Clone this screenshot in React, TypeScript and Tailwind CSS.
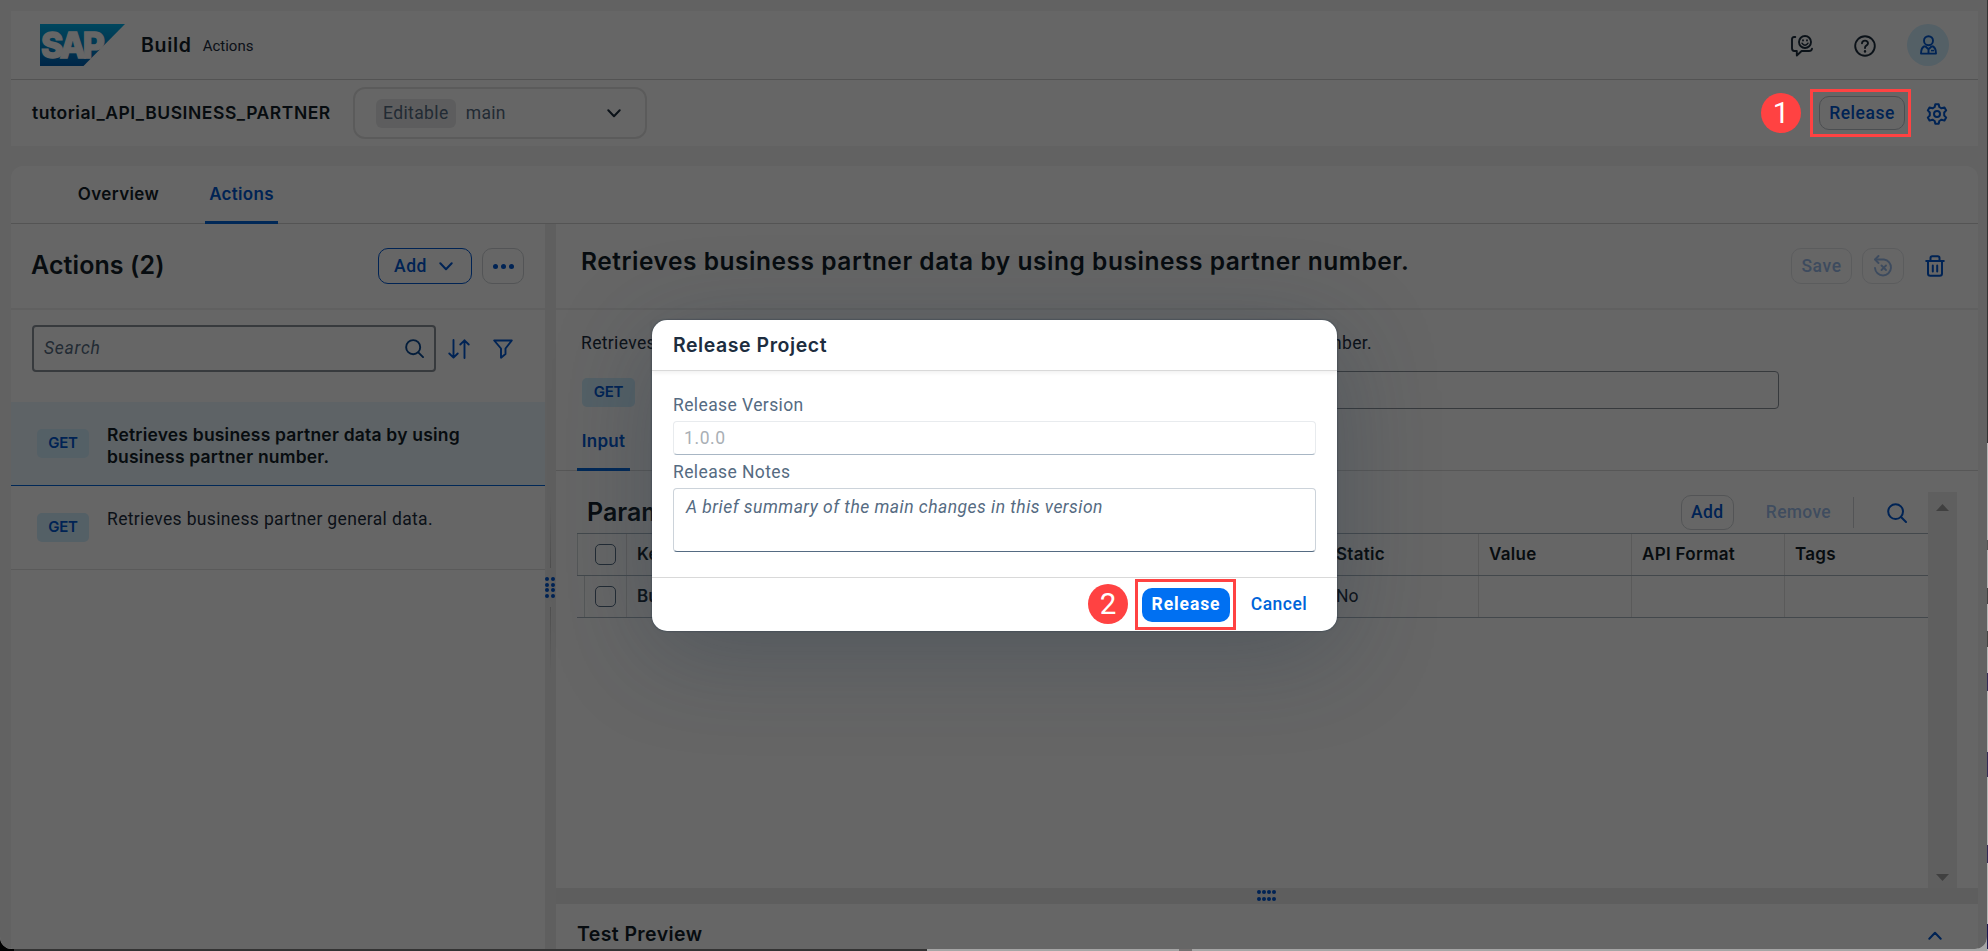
import type { ReactNode } from 'react';

const BOLD = "font-['Inter','Liberation_Sans',sans-serif] font-semibold";
const MEDIUM = "font-['Roboto','Liberation_Sans',sans-serif] font-medium";

function MethodTag({ className }: { className: string }) {
  return (
    <span className={`${BOLD} flex h-[29px] shrink-0 items-center justify-center rounded-[5px] bg-[#d1efff] pb-px text-[15px] tracking-[-0.2px] text-[#0057d2] ${className}`}>
      GET
    </span>
  );
}

function SearchIcon({ className }: { className: string }) {
  return (
    <svg className={className} viewBox="0 0 20 20" fill="none" stroke="currentColor" strokeWidth="2">
      <circle cx="8.6" cy="8.6" r="7.4" />
      <path d="M14 14l5 5" strokeLinecap="round" />
    </svg>
  );
}

function Chevron({ className }: { className: string }) {
  return (
    <svg className={className} viewBox="0 0 14 9" fill="none" stroke="currentColor" strokeWidth="2" strokeLinecap="round" strokeLinejoin="round">
      <path d="M1.3 1.3L7 7.3l5.7-6" />
    </svg>
  );
}

function SapLogo() {
  return (
    <svg className="h-[42px] w-[85px]" viewBox="0 0 85 42">
      <defs>
        <linearGradient id="sap" x1="0" y1="0" x2="0" y2="1">
          <stop offset="0" stopColor="#00b1eb" />
          <stop offset="0.5" stopColor="#0089cc" />
          <stop offset="1" stopColor="#0060b4" />
        </linearGradient>
      </defs>
      <path d="M0 0h85L43.5 42H0z" fill="url(#sap)" />
      <text x="1" y="34" textLength="61" lengthAdjust="spacingAndGlyphs" fill="#fff" stroke="#fff" strokeWidth="1.4" fontSize="35" fontWeight="800" fontFamily="Inter, Liberation Sans, sans-serif" letterSpacing="-3">
        SAP
      </text>
    </svg>
  );
}

function FeedbackIcon() {
  return (
    <svg className="h-[22px] w-[22px]" viewBox="0 0 22 22" fill="none" stroke="#1d2d3e" strokeWidth="1.9" strokeLinecap="round" strokeLinejoin="round">
      <path d="M4.300 2H3.200Q1 2 1 4.300v9Q1 16 3.300 16H5.800v4.500L10.600 16H18q2.600 0 3-2.200" />
      <circle cx="14" cy="7" r="6" />
      <path d="M11 8.200q1.200 2 3 2t3-2" strokeWidth="1.5" />
      <path d="M12 5.200v.4M16 5.200v.4" strokeWidth="1.9" />
    </svg>
  );
}

function HelpIcon() {
  return (
    <svg className="h-[22px] w-[22px]" viewBox="0 0 22 22" fill="none" stroke="#1d2d3e" strokeWidth="1.9" strokeLinecap="round">
      <circle cx="11" cy="11" r="9.8" />
      <path d="M8 8.300Q8.200 5.600 11 5.600T14 8.300Q14 9.800 12.300 10.700 11 11.400 11 13" />
      <path d="M11 16.200v.3" strokeWidth="2.4" />
    </svg>
  );
}

function PersonIcon() {
  return (
    <svg className="h-[20px] w-[17px]" viewBox="0 0 17 20" fill="none" stroke="#0057d2" strokeWidth="1.9" strokeLinejoin="round">
      <circle cx="8.5" cy="5.7" r="4.5" />
      <path d="M4.800 11Q1 12.500 1 18.600h15Q16 12.500 12.200 11" />
      <path d="M5 11l3.500 3.200L12 11M8.500 14v4.500" />
      <path d="M11 15.600h3" strokeWidth="1.5" />
    </svg>
  );
}

function GearIcon() {
  return (
    <svg className="h-[22px] w-[22px]" viewBox="0 0 22 22" fill="none" stroke="#0057d2" strokeWidth="2" strokeLinejoin="round">
      <path d="M9.300 1.200h3.400l.6 2.800 2.200 1.300 3-.9 1.700 3-2 2.100v3l2 2.100-1.700 3-3-.9-2.200 1.300-.6 2.800H9.300L8.700 18l-2.200-1.300-3 .9-1.700-3 2-2.100v-3l-2-2.100 1.700-3 3 .9L8.700 4z" />
      <circle cx="11" cy="11" r="3" />
    </svg>
  );
}

function UndoIcon() {
  return (
    <svg className="h-[22px] w-[21px]" viewBox="0 0 21 22" fill="none" stroke="#0057d2" strokeWidth="1.9" strokeLinecap="round" strokeLinejoin="round">
      <path d="M5.500 1L2 4.500 5.500 8" />
      <path d="M2.500 4.500H11a8 8 0 1 1-9 8.500" />
      <path d="M8.500 10.500l4.500 4.500M13 10.500l-4.500 4.500" />
    </svg>
  );
}

function TrashIcon() {
  return (
    <svg className="h-[22px] w-[20px]" viewBox="0 0 20 22" fill="none" stroke="#0057d2" strokeWidth="2" strokeLinecap="round" strokeLinejoin="round">
      <path d="M1.200 6h17.600M5.500 5.500V3Q5.500 1.200 7.300 1.200h5.400Q14.500 1.200 14.500 3v2.500" />
      <path d="M3 6v12.500Q3 20.800 5.300 20.800h9.400q2.300 0 2.300-2.300V6M7.800 10.500v6M12.200 10.500v6" />
    </svg>
  );
}

function SortIcon() {
  return (
    <svg className="h-[20px] w-[22px]" viewBox="0 0 22 20" fill="none" stroke="#0057d2" strokeWidth="1.9" strokeLinecap="round" strokeLinejoin="round">
      <path d="M5.500 1v17.500M1.300 14.500l4.200 4.200 4.200-4.200M16.500 19V1.300M12.300 5.500l4.200-4.200 4.200 4.200" />
    </svg>
  );
}

function FilterIcon() {
  return (
    <svg className="h-[20px] w-[20px]" viewBox="0 0 20 20" fill="none" stroke="#0057d2" strokeWidth="1.9" strokeLinejoin="round">
      <path d="M1.200 1.500h17.600l-6.300 8v5.500l-4.500 3.700V9.500z" />
    </svg>
  );
}

function Dots({ className, count }: { className: string; count: number }) {
  return (
    <div className={`grid ${className}`}>
      {Array.from({ length: count }, (_, i) => (
        <span key={i} className="size-[4px] rounded-full bg-[#0057d2]" />
      ))}
    </div>
  );
}

function Checkbox() {
  return <span className="size-[21px] rounded-[5px] border border-[#556b82]" />;
}

function ShellHeader() {
  return (
    <header className="flex h-[69px] items-center border-b border-[#cfcfcf] bg-white pr-[29px] pl-[29px]">
      <SapLogo />
      <span className="mt-[2px] ml-[16px] font-['Inter','Liberation_Sans',sans-serif] text-[19.5px] font-semibold tracking-[0.7px] text-[#131e29]">Build</span>
      <span className="mt-[2px] ml-[11px] font-['Roboto','Liberation_Sans',sans-serif] text-[15px] text-[#1d2d3e]">Actions</span>
      <div className="ml-auto flex items-center">
        <span className="mt-px">
          <FeedbackIcon />
        </span>
        <span className="mt-px ml-[41px]">
          <HelpIcon />
        </span>
        <span className="ml-[31px] flex size-[42px] items-center justify-center rounded-full bg-[#d1efff]">
          <PersonIcon />
        </span>
      </div>
    </header>
  );
}

function ProjectBar() {
  return (
    <div className="flex h-[66px] items-center bg-white pr-[30px] pl-[21px]">
      <span className={`${BOLD} text-[17.5px] tracking-[0.54px] text-[#131e29]`}>tutorial_API_BUSINESS_PARTNER</span>
      <div className="ml-[22px] flex h-[52px] w-[294px] items-center rounded-[12px] border-2 border-[#e4e4e4] pr-[24px] pl-[21px] text-[17.5px] text-[#556b82]">
        <span className="flex h-[29px] w-[80px] items-center justify-center rounded-[6px] bg-[#e8e9ea] tracking-[0.4px]">Editable</span>
        <span className="ml-[10px] tracking-[0.3px]">main</span>
        <Chevron className="ml-auto h-[9px] w-[14px] text-[#1d2d3e]" />
      </div>
      <div className="ml-auto flex items-center">
        <button className={`${MEDIUM} h-[34px] w-[86px] rounded-[10px] border border-[#bcc3ca] text-[17.5px] tracking-[0.53px] text-[#0057d2]`}>Release</button>
        <span className="mt-px ml-[21px]">
          <GearIcon />
        </span>
      </div>
    </div>
  );
}

function ActionsPanel() {
  return (
    <aside className="flex w-[534px] flex-col bg-white">
      <div className="flex h-[86px] items-center border-b-2 border-[#efefef] pr-[21px] pl-[20px]">
        <h2 className={`${BOLD} text-[25px] tracking-[0.1px] text-[#131e29]`}>Actions (2)</h2>
        <button className={`${MEDIUM} ml-auto flex h-[36px] w-[94px] items-center justify-center gap-[12px] rounded-[10px] border border-[#0057d2] pr-[3px] text-[17.5px] tracking-[0.6px] text-[#0057d2]`}>
          Add
          <Chevron className="h-[9px] w-[14px]" />
        </button>
        <button className="ml-[10px] flex h-[36px] w-[42px] items-center justify-center gap-[3px] rounded-[10px] border border-[#cfd3d7]">
          <i className="size-[5px] rounded-full bg-[#0057d2]" />
          <i className="size-[5px] rounded-full bg-[#0057d2]" />
          <i className="size-[5px] rounded-full bg-[#0057d2]" />
        </button>
      </div>
      <div className="flex h-[92px] items-start pt-[15px] pl-[21px]">
        <div className="flex h-[47px] w-[404px] items-center justify-between rounded-[4px] border-2 border-[#8b919a] pr-[10px] pl-[10px]">
          <span className="text-[17.5px] tracking-[0.75px] text-[#556b82] italic">Search</span>
          <SearchIcon className="size-[19px] text-[#0a4a94]" />
        </div>
        <div className="flex h-[47px] items-center gap-[23px] pl-[12px]">
          <SortIcon />
          <FilterIcon />
        </div>
      </div>
      <div className="flex h-[84px] border-b border-[#0064d9] bg-[#ebf8ff] pl-[26px]">
        <MethodTag className="mt-[27px] w-[52px]" />
        <p className={`${BOLD} mt-[22px] ml-[18px] w-[370px] text-[17.5px] leading-[22px] tracking-[0.2px] text-[#131e29]`}>
          Retrieves business partner data by using business partner number.
        </p>
      </div>
      <div className="flex h-[84px] border-b border-[#e0e0e0] pl-[26px]">
        <MethodTag className="mt-[27px] w-[52px]" />
        <p className="mt-[22px] ml-[18px] text-[17.5px] leading-[22px] tracking-[0.35px] text-[#1d2d3e]">Retrieves business partner general data.</p>
      </div>
    </aside>
  );
}

function HeadCell({ children }: { children?: ReactNode }) {
  return <span className="flex items-center border-l border-[#e0e0e0] pl-[10px]">{children}</span>;
}

const COLUMNS = 'grid grid-cols-[49px_699px_153px_153px_153px_144px]';

function ParametersTable() {
  return (
    <div className="flex w-[1351px] flex-col">
      <div className="flex h-[41px] items-center pr-[21px] pl-[10px]">
        <h3 className={`${BOLD} text-[25px] text-[#131e29]`}>Parameters</h3>
        <button className={`${MEDIUM} ml-auto h-[35px] w-[53px] rounded-[10px] border border-[#cfd3d7] text-[17.5px] tracking-[0.5px] text-[#0057d2]`}>Add</button>
        <span className={`${MEDIUM} ml-[32px] text-[17.5px] tracking-[0.3px] text-[#0057d2]/40`}>Remove</span>
        <i className="ml-[22px] h-[31px] w-px bg-[#cfd3d7]" />
        <SearchIcon className="ml-[33px] size-[20px] text-[#0057d2]" />
      </div>
      <div className={`${COLUMNS} ${BOLD} h-[43px] border-y border-[#a8b3bd] text-[17px] tracking-[0.3px] text-[#131e29]`}>
        <span className="flex items-center border-l border-[#d5d9dd] pl-[17px]">
          <Checkbox />
        </span>
        <HeadCell>Key</HeadCell>
        <HeadCell>Static</HeadCell>
        <HeadCell>Value</HeadCell>
        <HeadCell>API Format</HeadCell>
        <HeadCell>Tags</HeadCell>
      </div>
      <div className={`${COLUMNS} h-[42px] border-b border-[#a8b3bd] text-[17.5px] text-[#1d2d3e]`}>
        <span className="ml-[7px] flex items-center border-l border-[#d5d9dd] pl-[10px]">
          <Checkbox />
        </span>
        <HeadCell>
          <b className={`${BOLD} text-[17px]`}>BusinessPartner</b>
        </HeadCell>
        <HeadCell>No</HeadCell>
        <HeadCell />
        <HeadCell />
        <HeadCell />
      </div>
    </div>
  );
}

function ActionDetail() {
  return (
    <section className="flex w-[1422px] flex-col">
      <div className="flex h-[86px] shrink-0 justify-between border-b-2 border-[#efefef] bg-white pr-[33px] pl-[25px]">
        <h1 className={`${BOLD} h-[74px] text-[24.5px] leading-[74px] tracking-[0.54px] whitespace-nowrap text-[#131e29]`}>
          Retrieves business partner data by using business partner number.
        </h1>
        <div className="flex h-[84px] items-center">
          <button className={`${MEDIUM} h-[36px] w-[61px] rounded-[10px] border border-[#bcc3ca] text-[17.5px] tracking-[0.6px] text-[#0057d2] opacity-40`}>Save</button>
          <button className="ml-[10px] flex h-[36px] w-[42px] items-center justify-center rounded-[10px] border border-[#bcc3ca] opacity-40">
            <UndoIcon />
          </button>
          <span className="ml-[21px]">
            <TrashIcon />
          </span>
        </div>
      </div>
      <div className="flex h-[161px] shrink-0 flex-col border-b border-[#d9d9d9] bg-white">
        <div className="mt-[22px] ml-[25px] flex h-[22px] w-[791px] items-center justify-between text-[17.5px] tracking-[0.35px] text-[#1d2d3e]">
          <span>Retrieves business partner data by using</span>
          <span>business partner number.</span>
        </div>
        <div className="mt-[17px] ml-[26px] flex h-[38px] items-center">
          <MethodTag className="mt-[5px] w-[53px]" />
          <span className="ml-[40px] h-[38px] w-[1104px] rounded-[4px] border border-[#8b919a]" />
        </div>
        <div className="mt-auto ml-[21px] flex h-[53px] w-[53px] translate-y-px items-center justify-center border-b-[3px] border-[#0064d9]">
          <span className={`${BOLD} pb-[3px] text-[17px] tracking-[0.3px] text-[#0057d2]`}>Input</span>
        </div>
      </div>
      <div className="flex h-[417px] shrink-0 bg-white pt-[21px] pl-[21px]">
        <ParametersTable />
        <div className="flex w-[29px] flex-col items-center justify-between bg-[#eeeeee] pt-[12px] pb-[7px]">
          <svg className="h-[7px] w-[13px]" viewBox="0 0 13 7" fill="#a0a0a0">
            <path d="M0 7h13L6.500 0z" />
          </svg>
          <svg className="h-[7px] w-[13px]" viewBox="0 0 13 7" fill="#a0a0a0">
            <path d="M0 0h13L6.500 7z" />
          </svg>
        </div>
      </div>
      <div className="flex h-[16px] shrink-0 justify-center bg-[#ececec] pt-[2px]">
        <Dots count={8} className="h-[11px] w-[21px] grid-cols-4 content-between justify-between" />
      </div>
      <div className="flex h-[61px] shrink-0 items-center justify-between bg-white pr-[36px] pl-[21px]">
        <h3 className={`${BOLD} text-[19.5px] tracking-[0.4px] text-[#131e29]`}>Test Preview</h3>
        <Chevron className="mt-[2px] h-[9px] w-[14px] rotate-180 text-[#0057d2]" />
      </div>
    </section>
  );
}

function Page() {
  return (
    <div className="flex h-[949px] w-[1987px] flex-col bg-[#f5f5f5] pt-[11px] pr-[9px] pl-[11px]">
      <ShellHeader />
      <ProjectBar />
      <main className="mt-[20px] flex flex-col">
        <nav className="flex h-[58px] items-stretch rounded-t-[12px] border-b border-[#d2d2d2] bg-white pl-[62px] text-[17px]">
          <span className={`${BOLD} flex w-[91px] items-center justify-center pt-px text-[17px] tracking-[0.4px] text-[#131e29]`}>Overview</span>
          <span className={`${BOLD} ml-[41px] flex w-[73px] translate-y-px items-center justify-center border-b-[3px] border-[#0064d9] pt-px text-[17px] tracking-[0.3px] text-[#0057d2]`}>Actions</span>
        </nav>
        <div className="flex h-[725px]">
          <ActionsPanel />
          <div className="flex w-[11px] flex-col items-center bg-[#eeeeee] pt-[276px]">
            <i className="h-[68px] w-px bg-linear-to-t from-[#c4c4c4] to-[#eeeeee]" />
            <Dots count={8} className="my-[9px] h-[21px] w-[11px] grid-cols-2 content-between justify-between" />
            <i className="h-[68px] w-px bg-linear-to-b from-[#c4c4c4] to-[#eeeeee]" />
          </div>
          <ActionDetail />
        </div>
      </main>
    </div>
  );
}

function ReleaseDialog() {
  return (
    <div className="absolute top-[320px] left-[652px] flex h-[311px] w-[685px] flex-col rounded-[15px] bg-white text-[17.5px] shadow-[0_0_2px_rgba(34,53,72,0.9),0_20px_100px_rgba(34,53,72,0.3)]">
      <div className="flex h-[51px] items-center border-b border-[#d9d9d9] pl-[21px] shadow-[0_2px_4px_rgba(0,0,0,0.06)]">
        <h2 className={`${BOLD} pt-px text-[19.5px] tracking-[0.55px] text-[#1d2d3e]`}>Release Project</h2>
      </div>
      <div className="flex h-[206px] flex-col px-[21px] pt-[23px] text-[#556b82]">
        <label className="h-[22px] leading-[22px] tracking-[0.4px]">Release Version</label>
        <div className="mt-[5px] flex h-[34px] items-center rounded-[4px] border border-[#e8ebee] border-b-[#a8b6c4] pl-[10px] tracking-[0.6px] text-[#a9afb5]">1.0.0</div>
        <label className="mt-[6px] h-[22px] leading-[22px] tracking-[0.4px]">Release Notes</label>
        <div className="mt-[5px] h-[64px] rounded-[4px] border border-[#ccd3da] border-b-[#556b82] pt-[7px] pl-[12px] leading-[22px] tracking-[0.48px] italic">
          A brief summary of the main changes in this version
        </div>
      </div>
      <div className="flex h-[54px] items-center justify-end border-t border-[#d9d9d9] pr-[19px]">
        <button className="h-[34px] w-[88px] rounded-[10px] bg-[#0070f2] text-[17.5px] font-bold tracking-[0.9px] text-white">Release</button>
        <button className={`${MEDIUM} ml-[10px] w-[78px] text-[17.5px] tracking-[0.5px] text-[#0064d9]`}>Cancel</button>
      </div>
    </div>
  );
}

function Callout({ n, circle, frame }: { n: number; circle: string; frame: string }) {
  return (
    <>
      <span className={`absolute flex size-[40px] items-center justify-center rounded-full bg-[#ff4242] pt-[2px] font-['Roboto',sans-serif] text-[29.5px] leading-none text-white ${circle}`}>{n}</span>
      <span className={`absolute w-[101px] border-[3px] border-[#ff4242] ${frame}`} />
    </>
  );
}

export default function App() {
  return (
    <div className="relative h-[951px] w-[1988px] overflow-hidden bg-[#333] font-['Roboto','Liberation_Sans',sans-serif]">
      <i className="absolute bottom-0 left-0 size-[14px] bg-black" />
      <i className="absolute right-0 bottom-0 h-[14px] w-[1061px] bg-[#a5a5a5]" />
      <i className="absolute bottom-0 left-[1179px] h-[2px] w-[13px] bg-[#757171]" />
      <i className="absolute top-[443px] right-0 h-[508px] w-px bg-[#b5b5b5]" />
      <i className="absolute top-[540px] right-0 h-[10px] w-px bg-[#555]" />
      <i className="absolute top-[588px] right-0 h-[16px] w-px bg-[#444]" />
      <i className="absolute top-[631px] right-0 h-[16px] w-px bg-[#444]" />
      <i className="absolute top-[673px] right-0 h-[18px] w-px bg-[#352c55]" />
      <i className="absolute top-[752px] right-0 h-[25px] w-px bg-[#352c55]" />
      <i className="absolute top-[845px] right-0 h-[18px] w-px bg-[#352c55]" />
      <i className="absolute top-[924px] right-0 h-[25px] w-px bg-[#1d1850]" />
      <div className="relative h-[949px] w-[1987px] overflow-hidden rounded-b-[12px]">
        <Page />
        <div className="absolute inset-0 bg-black/60" />
        <ReleaseDialog />
      </div>
      <Callout n={1} circle="left-[1761px] top-[93px]" frame="left-[1810px] top-[89px] h-[48px]" />
      <Callout n={2} circle="left-[1088px] top-[584px]" frame="left-[1135px] top-[579px] h-[51px]" />
    </div>
  );
}
